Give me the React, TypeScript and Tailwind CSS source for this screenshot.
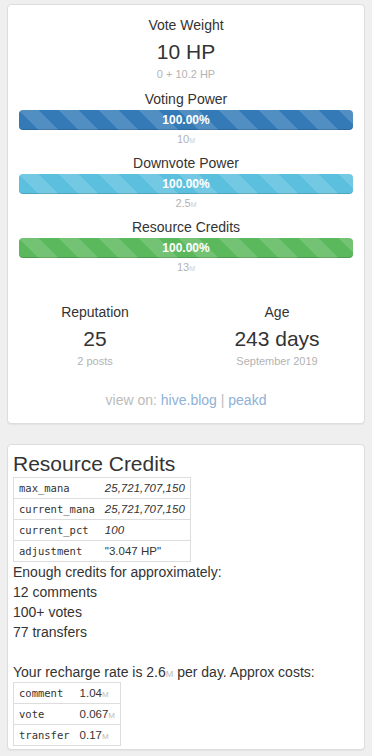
import React from "react";

const stripe =
  "bg-[image:linear-gradient(45deg,rgba(255,255,255,.15)_25%,transparent_25%,transparent_50%,rgba(255,255,255,.15)_50%,rgba(255,255,255,.15)_75%,transparent_75%,transparent)] bg-[length:40px_40px]";

function Bar({ label, color, sub, first }: { label: string; color: string; sub: string; first?: boolean }) {
  return (
    <div className={first ? "mt-[7px]" : "mt-[6px]"}>
      <div className="text-[14px] leading-[20px]">{label}</div>
      <div className={`mt-[1px] h-[20px] rounded-[4px] ${color} ${stripe} shadow-[inset_0_-1px_0_rgba(0,0,0,0.15)] text-[12px] font-bold leading-[20px] text-white`}>
        100.00%
      </div>
      <div className="mt-[1px] h-[16px] text-[11px] leading-[16px] text-[#b3b3b3]">
        {sub}
        <span className="text-[7px] leading-none text-[#ccc]">M</span>
      </div>
    </div>
  );
}

function Row({ k, v, last }: { k: string; v: React.ReactNode; last?: boolean }) {
  return (
    <tr className={last ? "" : "border-b border-[#ddd]"}>
      <td className="h-[21px] py-0 pl-[5px] pr-[5px] font-['DejaVu_Sans_Mono',monospace] text-[10.5px] leading-[14px] text-[#333] whitespace-nowrap">
        {k}
      </td>
      <td className="h-[21px] py-0 pl-[5px] pr-[5px] text-[11.5px] leading-[14px] text-[#333] whitespace-nowrap">{v}</td>
    </tr>
  );
}

function M() {
  return <span className="text-[8px] leading-none text-[#bbb]">M</span>;
}

export default function App() {
  return (
    <div className="min-h-screen bg-[#efefef] px-[7px] pt-[4px] pb-[6px] font-['Liberation_Sans',Arial,sans-serif] text-[#333]">
      <div className="rounded-[4px] border border-[#ddd] bg-white px-[11px] pt-[10px] pb-[13px] text-center shadow-[0_1px_1px_rgba(0,0,0,0.05)]">
        <div className="text-[14px] leading-[20px]">Vote Weight</div>
        <div className="mt-[5px] text-[21px] leading-[23px]">10 HP</div>
        <div className="mt-[3px] text-[11px] leading-[16px] text-[#b3b3b3]">0 + 10.2 HP</div>

        <Bar first label="Voting Power" color="bg-[#337ab7]" sub="10" />
        <Bar label="Downvote Power" color="bg-[#5bc0de]" sub="2.5" />
        <Bar label="Resource Credits" color="bg-[#5cb85c]" sub="13" />

        <div className="-mx-[15px] mt-[27px] grid grid-cols-2">
          <div>
            <div className="text-[14px] leading-[20px]">Reputation</div>
            <div className="mt-[5px] text-[21px] leading-[23px]">25</div>
            <div className="mt-[3px] text-[11px] leading-[16px] text-[#b3b3b3]">2 posts</div>
          </div>
          <div>
            <div className="text-[14px] leading-[20px]">Age</div>
            <div className="mt-[5px] text-[21px] leading-[23px]">243 days</div>
            <div className="mt-[3px] text-[11px] leading-[16px] text-[#b3b3b3]">September 2019</div>
          </div>
        </div>

        <div className="mt-[21px] text-[14px] leading-[20px] text-[#bbb]">
          view on: <span className="text-[#8fb1d6]">hive.blog</span> | <span className="text-[#8fb1d6]">peakd</span>
        </div>
      </div>

      <div className="mt-[20px] rounded-[4px] border border-[#ddd] bg-white px-[5px] pt-[7px] pb-[3px] text-[14px] leading-[20px] shadow-[0_1px_1px_rgba(0,0,0,0.05)]">
        <div className="text-[21px] leading-[24px]">Resource Credits</div>
        <table className="mt-[1px] border-collapse border border-[#ddd]">
          <tbody>
            <Row k="max_mana" v={<i>25,721,707,150</i>} />
            <Row k="current_mana" v={<i>25,721,707,150</i>} />
            <Row k="current_pct" v={<i>100</i>} />
            <Row k="adjustment" v={"\"3.047 HP\""} last />
          </tbody>
        </table>
        <div>Enough credits for approximately:</div>
        <div>12 comments</div>
        <div>100+ votes</div>
        <div>77 transfers</div>
        <div className="h-[20px]"></div>
        <div className="h-[20px]">
          Your recharge rate is 2.6<span className="text-[9px] leading-none text-[#bbb]">M</span> per day. Approx costs:
        </div>
        <table className="border-collapse border border-[#ddd]">
          <tbody>
            <Row k="comment" v={<>1.04<M /></>} />
            <Row k="vote" v={<>0.067<M /></>} />
            <Row k="transfer" v={<>0.17<M /></>} last />
          </tbody>
        </table>
      </div>
    </div>
  );
}
